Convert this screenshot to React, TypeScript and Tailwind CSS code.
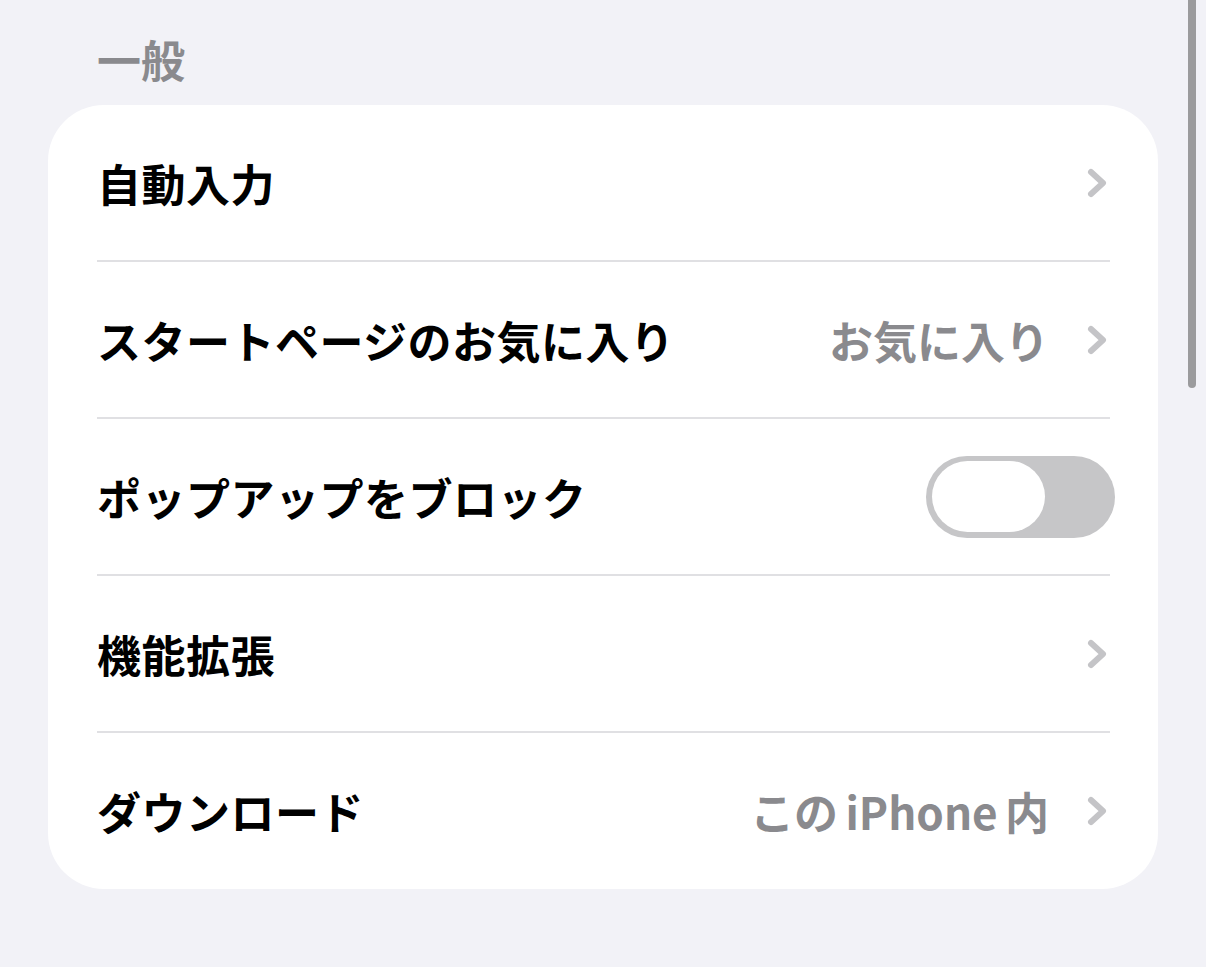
import React from "react";

const font = { fontFamily: '"Noto Sans CJK JP", "Noto Sans", sans-serif' };

function Chevron() {
  return (
    <svg width="22" height="32" viewBox="0 0 22 32" className="shrink-0">
      <path
        d="M5 5 L17 16 L5 27"
        fill="none"
        stroke="#c4c4c7"
        strokeWidth="6"
        strokeLinecap="round"
        strokeLinejoin="round"
      />
    </svg>
  );
}

function Toggle() {
  return (
    <div className="w-[189px] h-[82px] rounded-full bg-[#c6c6c8] flex items-center pl-[6px]">
      <div className="w-[113px] h-[71px] rounded-full bg-white" />
    </div>
  );
}

function Row({
  label,
  value,
  toggle,
  h,
}: {
  label: string;
  value?: string;
  toggle?: boolean;
  h: string;
}) {
  return (
    <div className={`flex items-center justify-between pl-[49px] ${toggle ? "pr-[43px]" : "pr-[50px]"} ${h}`}>
      <span className="text-[44px] font-bold text-black leading-none tracking-[0.5px]">{label}</span>
      {toggle ? (
        <Toggle />
      ) : (
        <div className="flex items-center gap-[37px]">
          {value && (
            <span className="text-[44px] font-bold text-[#8a8a8e] leading-none">{value}</span>
          )}
          <Chevron />
        </div>
      )}
    </div>
  );
}

function Sep() {
  return (
    <div className="pl-[49px] pr-[48px]">
      <div className="h-[2px] bg-[#e0e0e3]" />
    </div>
  );
}

export default function App() {
  return (
    <div className="relative w-[1206px] h-[967px] overflow-hidden bg-[#f2f2f7]" style={font}>
      <div className="pt-[37px] pl-[97px] h-[80px]">
        <div className="text-[44px] leading-[44px] font-bold text-[#8a8a8e]">一般</div>
      </div>
      <div className="mt-[25px] ml-[48px] w-[1110px] bg-white rounded-[56px] overflow-hidden">
        <Row label="自動入力" h="h-[155px]" />
        <Sep />
        <Row label="スタートページのお気に入り" value="お気に入り" h="h-[155px]" />
        <Sep />
        <Row label="ポップアップをブロック" toggle h="h-[155px]" />
        <Sep />
        <Row label="機能拡張" h="h-[155px]" />
        <Sep />
        <Row label="ダウンロード" value={"この\u2006iPhone\u2006内"} h="h-[156px]" />
      </div>
      <div className="absolute left-[1188px] top-[-10px] w-[8px] h-[398px] rounded-full bg-[#9b9b9d]" />
    </div>
  );
}
